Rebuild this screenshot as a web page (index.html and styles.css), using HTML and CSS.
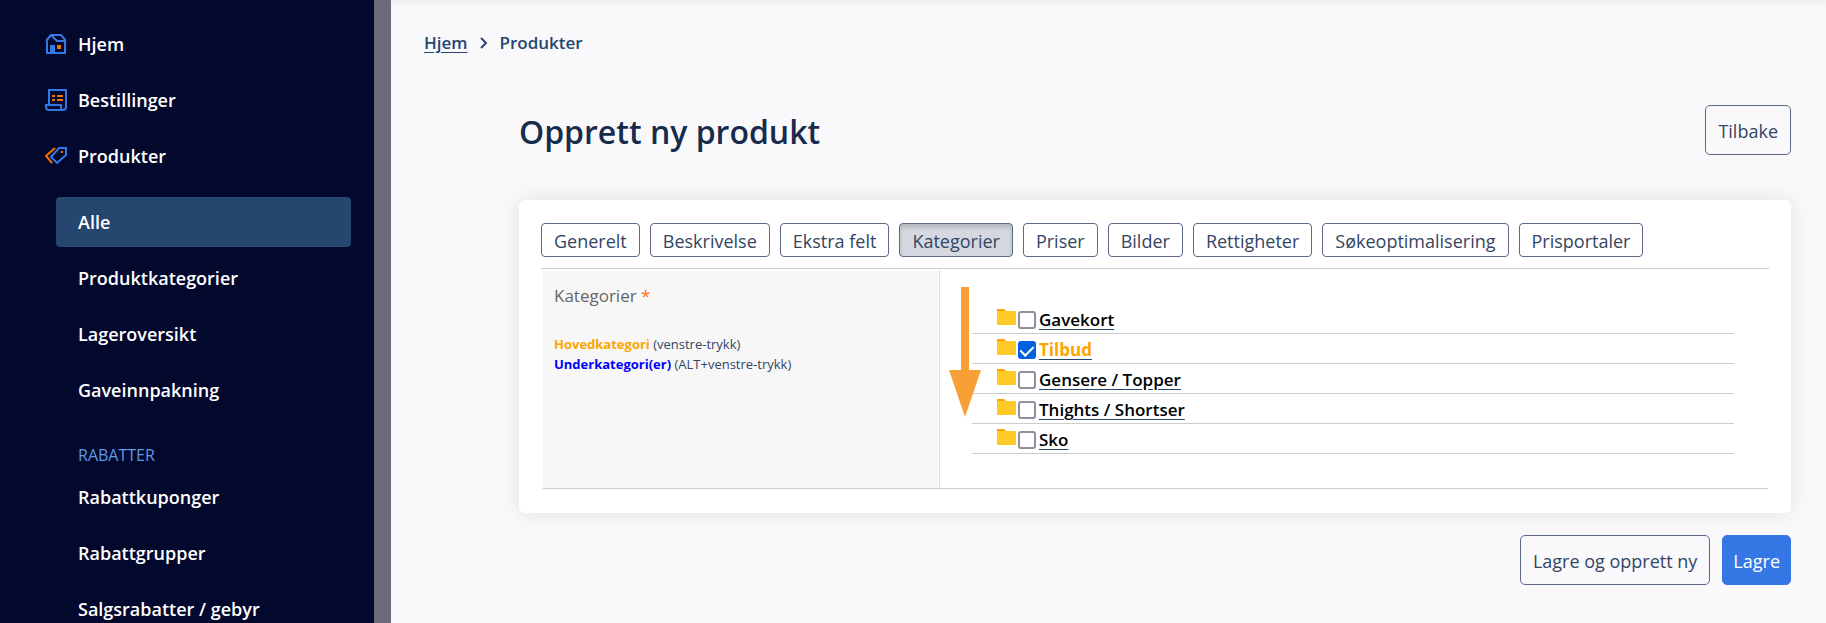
FILE: index.html
```html
<!DOCTYPE html>
<html lang="no">
<head>
    <meta charset="UTF-8">
    <meta name="viewport" content="width=device-width, initial-scale=1.0">
    <title>Opprett ny produkt</title>
    <link rel="stylesheet" href="styles.css">
</head>
<body>
    <!-- Sidebar -->
    <nav class="sidebar">
        <a class="nav-item" href="#">
            <svg class="nav-icon" viewBox="0 0 22 22" fill="none" stroke="#3578e5" stroke-width="2">
                <path d="M2 8v12h18V8M1 8l5-6h10l5 6M6 2l6 6h8"/>
                <path d="M5 12h5v8H5z" fill="#3578e5" stroke="none"/>
                <path d="M12 12h4v4h-4z" fill="#f57200" stroke="none"/>
            </svg>
            Hjem
        </a>
        <a class="nav-item" href="#">
            <svg class="nav-icon" viewBox="0 0 22 22" fill="none" stroke="#3578e5" stroke-width="2">
                <path d="M4 16V1h17v17a3 3 0 0 1-3 3H4a3 3 0 0 1-3-3v-2h15v3a2 2 0 0 0 2 2"/>
                <path d="M7 7h3M12 7h6M7 11h3M12 11h6" stroke="#f57200"/>
            </svg>
            Bestillinger
        </a>
        <a class="nav-item" href="#">
            <svg class="nav-icon" viewBox="0 0 22 22" fill="none" stroke="#3578e5" stroke-width="2">
                <path d="M14 3h7v7l-9 8-6-6z"/>
                <path d="M10 3l-9 8 6 7" stroke="#f57200"/>
                <path d="M16 6h2v2h-2z" fill="#f57200" stroke="none"/>
            </svg>
            Produkter
        </a>
        <div class="sub-menu">
            <a class="sub-item active" href="#">Alle</a>
            <a class="sub-item" href="#">Produktkategorier</a>
            <a class="sub-item" href="#">Lageroversikt</a>
            <a class="sub-item" href="#">Gaveinnpakning</a>
            <h2 class="sub-title">RABATTER</h2>
            <a class="sub-item" href="#">Rabattkuponger</a>
            <a class="sub-item" href="#">Rabattgrupper</a>
            <a class="sub-item" href="#">Salgsrabatter / gebyr</a>
        </div>
    </nav>

    <main class="main">
        <div class="breadcrumb">
            <a href="#">Hjem</a>
            <svg width="8" height="12" viewBox="0 0 8 12" fill="none" stroke="#24466f" stroke-width="2"><path d="M1 1l5 5-5 5"/></svg>
            <span>Produkter</span>
        </div>

        <div class="content">
            <div class="page-header">
                <h1>Opprett ny produkt</h1>
                <button class="btn" type="button">Tilbake</button>
            </div>

            <div class="card">
                <!-- Tabs -->
                <div class="tabs">
                    <button class="tab" type="button">Generelt</button>
                    <button class="tab" type="button">Beskrivelse</button>
                    <button class="tab" type="button">Ekstra felt</button>
                    <button class="tab active" type="button">Kategorier</button>
                    <button class="tab" type="button">Priser</button>
                    <button class="tab" type="button">Bilder</button>
                    <button class="tab" type="button">Rettigheter</button>
                    <button class="tab" type="button">Søkeoptimalisering</button>
                    <button class="tab" type="button">Prisportaler</button>
                </div>

                <!-- Category picker -->
                <div class="form-row">
                    <div class="form-label">
                        <p class="label-text">Kategorier <span class="required">*</span></p>
                        <p class="hint"><b class="main-category">Hovedkategori</b> (venstre-trykk)</p>
                        <p class="hint"><b class="other-category">Underkategori(er)</b> (ALT+venstre-trykk)</p>
                    </div>
                    <div class="form-field">
                        <svg class="arrow" width="32" height="130" viewBox="0 0 32 130"><path d="M12 0h8v83h12l-16 47L0 83h12z" fill="#f89f36"/></svg>
                        <ul class="categories">
                            <li>
                                <svg class="folder" viewBox="0 0 19 16"><path d="M0 0h7l2 2v3H0z" fill="#ffa000"/><path d="M1 2h17a1 1 0 0 1 1 1v12a1 1 0 0 1-1 1H1a1 1 0 0 1-1-1V3a1 1 0 0 1 1-1z" fill="#ffca28"/></svg>
                                <input type="checkbox" id="gavekort" aria-labelledby="gavekort-name">
                                <a href="#" id="gavekort-name">Gavekort</a>
                            </li>
                            <li>
                                <svg class="folder" viewBox="0 0 19 16"><path d="M0 0h7l2 2v3H0z" fill="#ffa000"/><path d="M1 2h17a1 1 0 0 1 1 1v12a1 1 0 0 1-1 1H1a1 1 0 0 1-1-1V3a1 1 0 0 1 1-1z" fill="#ffca28"/></svg>
                                <input type="checkbox" id="tilbud" aria-labelledby="tilbud-name" checked>
                                <a href="#" id="tilbud-name" class="selected">Tilbud</a>
                            </li>
                            <li>
                                <svg class="folder" viewBox="0 0 19 16"><path d="M0 0h7l2 2v3H0z" fill="#ffa000"/><path d="M1 2h17a1 1 0 0 1 1 1v12a1 1 0 0 1-1 1H1a1 1 0 0 1-1-1V3a1 1 0 0 1 1-1z" fill="#ffca28"/></svg>
                                <input type="checkbox" id="gensere" aria-labelledby="gensere-name">
                                <a href="#" id="gensere-name">Gensere / Topper</a>
                            </li>
                            <li>
                                <svg class="folder" viewBox="0 0 19 16"><path d="M0 0h7l2 2v3H0z" fill="#ffa000"/><path d="M1 2h17a1 1 0 0 1 1 1v12a1 1 0 0 1-1 1H1a1 1 0 0 1-1-1V3a1 1 0 0 1 1-1z" fill="#ffca28"/></svg>
                                <input type="checkbox" id="thights" aria-labelledby="thights-name">
                                <a href="#" id="thights-name">Thights / Shortser</a>
                            </li>
                            <li>
                                <svg class="folder" viewBox="0 0 19 16"><path d="M0 0h7l2 2v3H0z" fill="#ffa000"/><path d="M1 2h17a1 1 0 0 1 1 1v12a1 1 0 0 1-1 1H1a1 1 0 0 1-1-1V3a1 1 0 0 1 1-1z" fill="#ffca28"/></svg>
                                <input type="checkbox" id="sko" aria-labelledby="sko-name">
                                <a href="#" id="sko-name">Sko</a>
                            </li>
                        </ul>
                    </div>
                </div>
            </div>

            <div class="actions">
                <button class="btn" type="button">Lagre og opprett ny</button>
                <button class="btn btn-primary" type="submit">Lagre</button>
            </div>
        </div>
    </main>
</body>
</html>
```
FILE: styles.css
```css
* {
    box-sizing: border-box;
}

body {
    margin: 0;
    display: flex;
    min-height: 100vh;
    font-family: "Segoe UI", "Open Sans", sans-serif;
    font-size: 18px;
    line-height: 24px;
    color: #344563;
    background-color: #f9f9fb;
}

h1, h2, p, ul {
    margin: 0;
    padding: 0;
}

button {
    font: inherit;
    color: inherit;
    cursor: pointer;
}

/* Sidebar */
.sidebar {
    flex: none;
    width: 391px;
    height: 100vh;
    overflow: hidden;
    padding: 19px 23px 0 45px;
    border-right: 17px solid #6b6a7b;
    background-color: #03082d;
}

.nav-item,
.sub-item {
    display: flex;
    align-items: center;
    height: 50px;
    margin-bottom: 6px;
    border-radius: 4px;
    color: #fff;
    font-weight: 600;
    text-decoration: none;
}

.nav-icon {
    width: 22px;
    height: 22px;
    margin-right: 11px;
}

.sub-menu {
    margin: 16px 0 0 11px;
}

.sub-item {
    padding-left: 22px;
}

.sub-item.active {
    background-color: #24466f;
}

.sub-title {
    padding: 22px 0 5px 22px;
    font-size: 16px;
    font-weight: 500;
    color: #5e9ae6;
}

/* Main area */
.main {
    flex: 1;
    min-width: 0;
    padding: 31px 35px 30px 33px;
    box-shadow: inset 0 8px 10px -8px rgba(0, 0, 0, 0.08);
}

.breadcrumb {
    display: flex;
    align-items: center;
    gap: 12px;
    font-size: 17px;
    font-weight: 600;
    color: #24466f;
}

.breadcrumb a {
    color: inherit;
    text-underline-offset: 3px;
}

.content {
    margin: 50px 0 0 95px;
}

.page-header {
    display: flex;
    justify-content: space-between;
    align-items: center;
    margin-bottom: 45px;
}

h1 {
    padding-top: 4px;
    font-size: 32px;
    line-height: 46px;
    font-weight: 600;
    color: #172b4d;
}

.btn {
    height: 50px;
    padding: 2px 12px 0;
    border: 1px solid #5b6987;
    border-radius: 5px;
    background-color: transparent;
}

.btn-primary {
    padding: 2px 10px 0;
    border-color: #3578e5;
    background-color: #3578e5;
    color: #fff;
}

.card {
    padding: 23px 22px 24px;
    border-radius: 6px;
    background-color: #fff;
    box-shadow: 0 0 20px rgba(0, 0, 0, 0.1);
}

/* Tabs */
.tabs {
    display: flex;
    flex-wrap: wrap;
    gap: 10px;
    padding-bottom: 11px;
    border-bottom: 1px solid #ccc;
}

.tab {
    height: 34px;
    padding: 2px 12px 0;
    border: 1px solid #5b6987;
    border-radius: 4px;
    background-color: #fff;
}

.tab.active {
    background-color: #d5d8e0;
    box-shadow: inset 0 3px 5px rgba(0, 0, 0, 0.16);
}

/* Category form */
.form-row {
    display: flex;
    margin: 2px 1px 0 2px;
    border-bottom: 1px solid #ccc;
}

.form-label {
    width: 397px;
    padding: 13px 11px;
    border-right: 1px dotted #ccc;
    background-color: #f7f7f7;
}

.label-text {
    margin-bottom: 26px;
    font-size: 17px;
    color: #666;
}

.required {
    color: #ff6a13;
}

.hint {
    font-size: 13px;
    line-height: 20px;
}

.main-category {
    color: #ffa500;
}

.other-category {
    color: #0000ff;
}

.form-field {
    position: relative;
    flex: 1;
    padding: 33px 34px 34px 32px;
}

/* The arrow lies over the left end of the list lines */
.arrow {
    position: absolute;
    top: 16px;
    left: 9px;
}

.categories {
    list-style: none;
}

.categories li {
    display: flex;
    align-items: center;
    padding: 3px 0 1px 25px;
    border-bottom: 1px solid #ccc;
}

.folder {
    width: 19px;
    height: 16px;
    margin-bottom: 5px;
}

.categories input {
    appearance: none;
    display: grid;
    place-items: center;
    width: 18px;
    height: 18px;
    margin: 0 3px 0 2px;
    border: 2px solid #8f8f9d;
    border-radius: 3px;
    background-color: #fff;
}

.categories input:checked {
    border-color: #0060df;
    background-color: #0060df;
}

.categories input:checked::after {
    content: "";
    width: 6px;
    height: 11px;
    margin-bottom: 3px;
    border: solid #fff;
    border-width: 0 2px 2px 0;
    transform: rotate(45deg);
}

.categories a {
    padding-top: 1px;
    font-size: 17px;
    font-weight: 600;
    color: #000;
    text-decoration-color: #24466f;
    text-underline-offset: 3px;
}

.categories .selected {
    font-weight: 700;
    color: #ffa500;
}

.actions {
    display: flex;
    justify-content: flex-end;
    gap: 12px;
    margin-top: 22px;
}
```
